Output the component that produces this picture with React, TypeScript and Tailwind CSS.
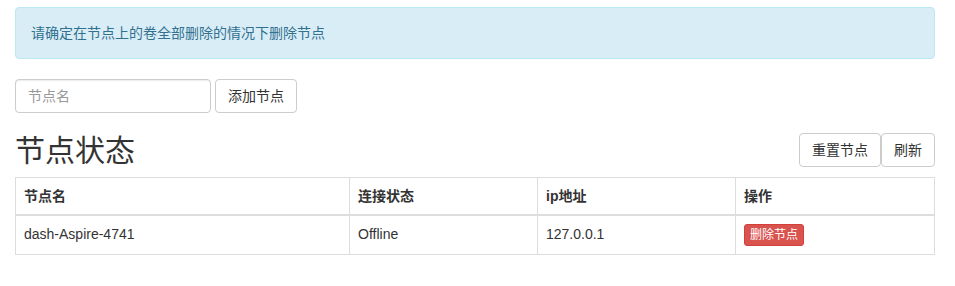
export default function App() {
  const rows = [{ name: 'dash-Aspire-4741', status: 'Offline', ip: '127.0.0.1' }];

  return (
    <div
      className="min-h-[286px] bg-white pt-[7px] pr-[20px] pl-[15px] text-[14px] leading-[20px] text-[#333]"
      style={{ fontFamily: '"Liberation Sans", Arial, "Noto Sans CJK SC", sans-serif' }}
    >
      {/* Alert */}
      <div className="mb-[20px] rounded-[4px] border border-[#bce8f1] bg-[#d9edf7] p-[15px] text-[#31708f]">
        请确定在节点上的卷全部删除的情况下删除节点
      </div>

      {/* Add node */}
      <div className="flex gap-[4px]">
        <input
          type="text"
          placeholder="节点名"
          className="h-[34px] w-[196px] rounded-[4px] border border-[#ccc] px-[12px] py-[6px] text-[14px] text-[#555] shadow-[inset_0_1px_1px_rgba(0,0,0,0.075)] outline-none placeholder:text-[#999]"
        />
        <button className="h-[34px] rounded-[4px] border border-[#ccc] bg-white px-[12px] text-[14px] text-[#333]">
          添加节点
        </button>
      </div>

      {/* Header */}
      <div className="mt-[20px] mb-[10px] flex h-[34px] items-center justify-between">
        <h2 className="text-[30px] leading-[33px] font-normal text-[#333]">节点状态</h2>
        <div className="flex">
          <button className="h-[34px] rounded-[4px] border border-[#ccc] bg-white px-[12px] text-[14px] text-[#333]">
            重置节点
          </button>
          <button className="h-[34px] rounded-[4px] border border-[#ccc] bg-white px-[12px] text-[14px] text-[#333]">
            刷新
          </button>
        </div>
      </div>

      {/* Table */}
      <table className="w-full border-collapse border border-[#ddd]">
        <thead>
          <tr>
            <th className="w-[334px] border border-b-2 border-[#ddd] p-[8px] text-left align-bottom font-bold">节点名</th>
            <th className="w-[188px] border border-b-2 border-[#ddd] p-[8px] text-left align-bottom font-bold">连接状态</th>
            <th className="w-[198px] border border-b-2 border-[#ddd] p-[8px] text-left align-bottom font-bold">ip地址</th>
            <th className="border border-b-2 border-[#ddd] p-[8px] text-left align-bottom font-bold">操作</th>
          </tr>
        </thead>
        <tbody>
          {rows.map((r) => (
            <tr key={r.name}>
              <td className="border border-[#ddd] p-[8px] align-top">{r.name}</td>
              <td className="border border-[#ddd] p-[8px] align-top">{r.status}</td>
              <td className="border border-[#ddd] p-[8px] align-top">{r.ip}</td>
              <td className="border border-[#ddd] p-[8px] align-top">
                <button className="block rounded-[3px] border border-[#d43f3a] bg-[#d9534f] px-[5px] py-[1px] text-[12px] leading-[18px] text-white">
                  删除节点
                </button>
              </td>
            </tr>
          ))}
        </tbody>
      </table>
    </div>
  );
}
